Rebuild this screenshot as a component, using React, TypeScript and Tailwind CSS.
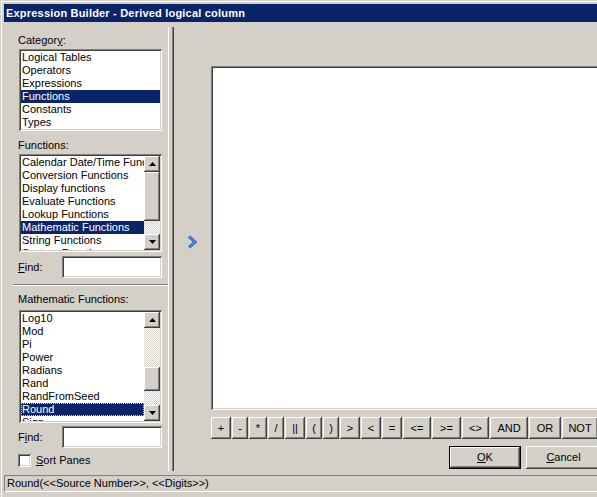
import React from "react";

const raised =
  "shadow-[inset_-1px_-1px_0_#404040,inset_1px_1px_0_#ffffff,inset_-2px_-2px_0_#808080]";
const sunken =
  "shadow-[inset_1px_1px_0_#808080,inset_-1px_-1px_0_#ffffff,inset_2px_2px_0_#404040,inset_-2px_-2px_0_#d4d0c8]";
const track =
  "bg-[image:repeating-conic-gradient(#ffffff_0_25%,#d4d0c8_0_50%)] bg-[length:2px_2px]";

function Arrow({ up }: { up?: boolean }) {
  return (
    <svg width="7" height="4" viewBox="0 0 7 4">
      {up ? <polygon points="3.5,0 7,4 0,4" fill="#000" /> : <polygon points="0,0 7,0 3.5,4" fill="#000" />}
    </svg>
  );
}

function ScrollBar({ before, thumb, after }: { before: number; thumb: number; after: number }) {
  return (
    <div className="flex w-[16px] shrink-0 flex-col">
      <div className={`flex h-[16px] items-center justify-center bg-[#d4d0c8] ${raised}`}>
        <Arrow up />
      </div>
      <div className={track} style={{ height: before }} />
      <div className={`bg-[#d4d0c8] ${raised}`} style={{ height: thumb }} />
      <div className={track} style={{ height: after }} />
      <div className={`flex h-[16px] items-center justify-center bg-[#d4d0c8] ${raised}`}>
        <Arrow />
      </div>
    </div>
  );
}

function ListBox({
  items,
  selected,
  height,
  scroll,
  focus,
}: {
  items: string[];
  selected: string;
  height: number;
  scroll?: { before: number; thumb: number; after: number };
  focus?: boolean;
}) {
  return (
    <div className={`ml-[1px] flex w-[143px] bg-white p-[2px] ${sunken}`} style={{ height }}>
      <div className="min-w-0 flex-1 overflow-hidden">
        {items.map((it) => (
          <div
            key={it}
            className={`h-[13px] overflow-hidden whitespace-nowrap pl-[1px] ${
              it === selected ? "bg-[#0a246a] text-white" : ""
            } ${it === selected && focus ? "outline-1 -outline-offset-1 outline-dotted outline-[#d4d0c8]" : ""}`}
          >
            {it}
          </div>
        ))}
      </div>
      {scroll && <ScrollBar {...scroll} />}
    </div>
  );
}

function FindRow({ hot }: { hot: "F" | "i" }) {
  return (
    <div className="flex h-[22px] items-center">
      <span className="w-[44px]">
        {hot === "F" ? (
          <>
            <u>F</u>ind:
          </>
        ) : (
          <>
            F<u>i</u>nd:
          </>
        )}
      </span>
      <div className={`h-[22px] w-[100px] bg-white ${sunken}`} />
    </div>
  );
}

const ops: [string, number][] = [
  ["+", 20],
  ["-", 16],
  ["*", 18],
  ["/", 16],
  ["||", 20],
  ["(", 16],
  [")", 16],
  [">", 20],
  ["<", 20],
  ["=", 20],
  ["<=", 28],
  [">=", 29],
  ["<>", 27],
  ["AND", 38],
  ["OR", 32],
  ["NOT", 36],
];

export default function App() {
  return (
    <div className="flex h-[497px] w-[597px] flex-col overflow-hidden bg-[#d4d0c8] pl-[4px] pt-[4px] font-['Liberation_Sans',Arial,sans-serif] text-[11px] leading-[13px] text-black shadow-[inset_1px_1px_0_#d4d0c8,inset_2px_2px_0_#ffffff]">
      {/* Title bar */}
      <div className="flex h-[18px] shrink-0 items-center bg-[#0a246a] pl-[2px] text-[11px] font-bold tracking-[0.2px] text-white">
        Expression Builder - Derived logical column
      </div>

      <div className="flex h-[449px] shrink-0">
        {/* Left panel */}
        <div className="flex w-[164px] shrink-0 flex-col pl-[14px] pt-[12px]">
          <div className="mb-[2px] h-[13px]">
            Categor<u>y</u>:
          </div>
          <ListBox
            items={["Logical Tables", "Operators", "Expressions", "Functions", "Constants", "Types"]}
            selected="Functions"
            height={82}
          />
          <div className="mb-[2px] mt-[8px] h-[13px]">Functions:</div>
          <ListBox
            items={[
              "Calendar Date/Time Functions",
              "Conversion Functions",
              "Display functions",
              "Evaluate Functions",
              "Lookup Functions",
              "Mathematic Functions",
              "String Functions",
              "System Functions",
            ]}
            selected="Mathematic Functions"
            height={98}
            scroll={{ before: 0, thumb: 49, after: 13 }}
          />
          <div className="mt-[4px]">
            <FindRow hot="F" />
          </div>
          <div className="-ml-[5px] mt-[6px] h-[2px] w-[155px] border-t border-b border-t-[#808080] border-b-white" />
          <div className="mb-[4px] mt-[7px] h-[13px]">Mathematic Functions:</div>
          <ListBox
            items={["Log10", "Mod", "Pi", "Power", "Radians", "Rand", "RandFromSeed", "Round", "Sign"]}
            selected="Round"
            focus
            height={113}
            scroll={{ before: 39, thumb: 24, after: 14 }}
          />
          <div className="mt-[3px]">
            <FindRow hot="i" />
          </div>
          <div className="mt-[6px] flex h-[13px] items-center gap-[5px]">
            <div className={`h-[13px] w-[13px] bg-white ${sunken}`} />
            <span>
              <u>S</u>ort Panes
            </span>
          </div>
        </div>

        {/* Splitter */}
        <div className="mt-[5px] flex h-[444px] w-[6px] shrink-0">
          <div className="w-[1px] bg-white" />
          <div className="w-[3px]" />
          <div className="w-[1px] bg-[#808080]" />
          <div className="w-[1px] bg-[#404040]" />
        </div>

        {/* Right panel */}
        <div className="flex min-w-0 flex-1">
          <div className="flex w-[37px] shrink-0 items-center pb-[10px] pl-[13px]">
            <svg width="11" height="14" viewBox="0 0 11 14">
              <polyline points="2,1.5 8,7 2,12.5" fill="none" stroke="#1a56c8" strokeWidth="3" />
              <polyline points="2,1.5 8,7 2,12.5" fill="none" stroke="#7fb2ff" strokeWidth="1" />
            </svg>
          </div>
          <div className="flex flex-col">
            <div className={`mt-[44px] h-[344px] w-[400px] bg-white ${sunken}`} />
            <div className="mt-[7px] flex h-[22px] gap-[1px]">
              {ops.map(([label, w]) => (
                <div
                  key={label}
                  className={`flex h-[22px] shrink-0 items-center justify-center bg-[#d4d0c8] ${raised}`}
                  style={{ width: w }}
                >
                  {label}
                </div>
              ))}
            </div>
            <div className="mt-[7px] flex h-[23px] gap-[5px] pl-[238px]">
              <div className="flex h-[23px] w-[72px] shrink-0 items-center justify-center border border-black bg-[#d4d0c8] shadow-[inset_-1px_-1px_0_#404040,inset_1px_1px_0_#ffffff,inset_-2px_-2px_0_#808080]">
                <u>O</u>K
              </div>
              <div className={`flex h-[23px] w-[75px] shrink-0 items-center justify-center bg-[#d4d0c8] ${raised}`}>
                <u>C</u>ancel
              </div>
            </div>
          </div>
        </div>
      </div>

      {/* Status bar */}
      <div className="mt-[4px] flex h-[17px] shrink-0 items-center border-l border-t border-b border-l-[#808080] border-t-[#808080] border-b-white pl-[2px]">
        {"Round(<<Source Number>>, <<Digits>>)"}
      </div>
    </div>
  );
}
